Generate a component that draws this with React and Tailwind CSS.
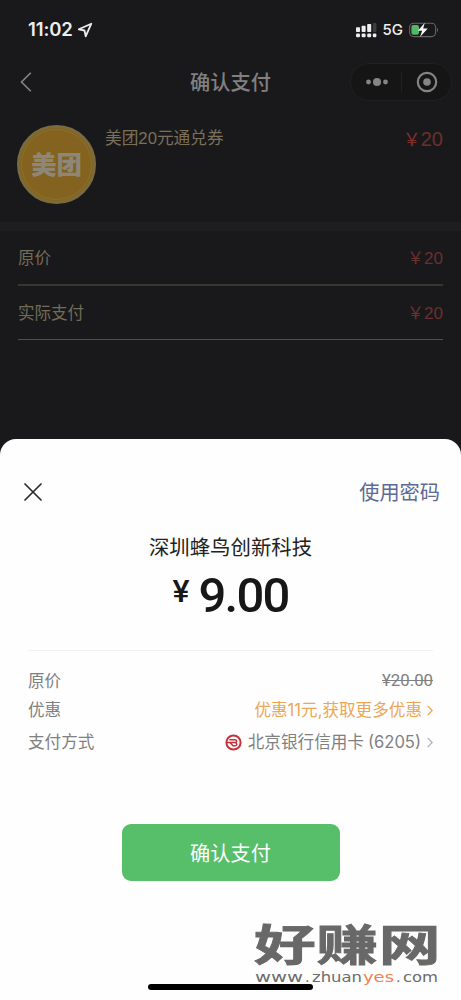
import React from 'react';

const bill = [
  { label: '原价', amount: '20', className: 'h-[55px] border-b-2 border-[#373731]' },
  { label: '实际支付', amount: '20', className: 'h-[54px] border-b border-[#505049]' },
];

const LocationArrow = () => (
  <svg viewBox="0 0 16 16" className="w-4 h-4" fill="none" stroke="#ededed" strokeWidth="1.8" strokeLinejoin="round">
    <path d="M14.3 1.7 1.8 7.3l5.7 1.2 1.2 5.8z" />
  </svg>
);

const Signal = () => (
  <svg viewBox="0 0 21 15" className="w-[21px] h-[15px]" fill="#ededed">
    <rect x="0" y="4.2" width="4" height="4.8" rx="0.8" />
    <rect x="5.6" y="2.8" width="4" height="6.2" rx="0.8" />
    <rect x="11.2" y="1" width="4" height="8" rx="0.8" />
    <rect x="16.8" y="0" width="3.6" height="9" rx="0.8" fill="#3d3d40" />
    <rect x="0" y="10.6" width="4" height="3.6" rx="1.2" />
    <rect x="5.6" y="10.6" width="4" height="3.6" rx="1.2" />
    <rect x="11.2" y="10.6" width="4" height="3.6" rx="1.2" />
    <rect x="16.8" y="10.6" width="3.6" height="3.6" rx="1.2" />
  </svg>
);

const Battery = () => (
  <svg viewBox="0 0 30 16" className="w-[30px] h-4">
    <rect x="0.6" y="1.2" width="26" height="13.4" rx="4" fill="none" stroke="#656567" strokeWidth="1.1" />
    <path d="M28 5.8c1.4.6 1.4 3.6 0 4.2z" fill="#656567" />
    <rect x="2.4" y="3" width="7.6" height="9.8" rx="2" fill="#54b965" />
    <path d="M15.8.8 8.8 8.8h4.3L11 15l7.8-8.6h-4.6z" fill="#f4f4f4" />
  </svg>
);

const BankLogo = () => (
  <svg viewBox="0 0 17 17" className="w-[17px] h-[17px]" fill="none" stroke="#c5313c">
    <circle cx="8.5" cy="8.5" r="7.1" strokeWidth="2" />
    <path d="M4.4 5.8h5.4c2.4 0 2.4 2.8.2 2.8H2M9.8 8.6c2.6 0 2.6 3.2.2 3.2H8L5.2 8.8" strokeWidth="1.5" />
  </svg>
);

const Chevron = ({ className }) => (
  <svg viewBox="0 0 6 11" className={className} fill="none" stroke="currentColor" strokeWidth="1.3">
    <path d="M.7.9 5.1 5.5.7 10.1" />
  </svg>
);

const Coupon = () => (
  <div className="flex h-[118px] pt-[21px] pl-[17px] pr-[18px]">
    <div className="w-[79px] h-[79px] shrink-0 rounded-full bg-[#83631f] border-[3px] border-[#7b6a3b] p-px">
      <div className="w-full h-full rounded-full border border-[#907024] flex items-center justify-center pt-[2px] text-[25.5px] leading-none font-black text-[#8e8778]">
        <span>美团</span>
      </div>
    </div>
    <p className="ml-[9px] pt-[1px] text-[16.7px] leading-[26px] text-[#7a7059]">美团20元通兑券</p>
    <p className="ml-auto text-[20px] leading-[28px] text-[#69302d]">
      <span className="text-[18px] text-[#80302b]">￥</span>20
    </p>
  </div>
);

const PaySheet = () => (
  <section className="h-[561px] bg-[#fefefe] rounded-t-[16px] pt-[38px] font-['Inter','Noto_Sans_CJK_SC',sans-serif]">
    <div className="flex items-center justify-between h-[30px] pl-[24px] pr-[21px]">
      <svg viewBox="0 0 18 18" className="w-[18px] h-[18px]" stroke="#2b2b2b" strokeWidth="1.7" strokeLinecap="round">
        <path d="M1 1l16 16M17 1 1 17" />
      </svg>
      <span className="pt-[2px] text-[20.2px] leading-[30px] text-[#5d6a94]">使用密码</span>
    </div>

    <h2 className="mt-[26px] text-center text-[20.4px] leading-[30px] text-[#222222]">深圳蜂鸟创新科技</h2>
    <div className="flex justify-center h-[56px] mt-[4px] font-['Roboto',sans-serif] font-medium text-[#171717]">
      <span className="mt-[5px] mr-[9px] text-[32px] leading-[38px]">¥</span>
      <span className="pt-[1px] text-[49px] leading-[56px] tracking-[-1.8px]">9.00</span>
    </div>

    <div className="mx-[28px] mt-[27px] pt-[16px] border-t border-[#f0f0f0] text-[16.6px] text-[#808080]">
      <div className="flex justify-between h-[29px] leading-[28px]">
        <span>原价</span>
        <span className="line-through font-['Roboto',sans-serif] text-[16.8px] leading-[27px]">¥20.00</span>
      </div>
      <div className="flex justify-between h-[30px] leading-[28px]">
        <span>优惠</span>
        <span className="flex items-center h-[28px] text-[#eba755]">
          优惠11元,获取更多优惠
          <Chevron className="w-[6px] h-[11px] ml-[5px]" />
        </span>
      </div>
      <div className="flex justify-between h-[32px] leading-[32px]">
        <span>支付方式</span>
        <span className="flex items-center">
          <BankLogo />
          <span className="ml-[6px] mr-[4px]">北京银行信用卡</span>
          (6205)
          <Chevron className="w-[6px] h-[11px] ml-[6px] text-[#b4b4b4]" />
        </span>
      </div>
    </div>

    <button className="block mx-auto mt-[66px] w-[218px] h-[57px] pt-[3px] rounded-[9px] bg-[#57be6a] text-[20.2px] text-white">
      确认支付
    </button>
    <div className="mx-auto mt-[103px] w-[165px] h-[6px] rounded-full bg-black" />
  </section>
);

const Watermark = () => (
  <div className="absolute left-[254px] top-[912px] w-[190px]">
    <div className="flex origin-left scale-x-[1.42] gap-[0.4px] h-[56px] font-['Noto_Sans_CJK_SC',sans-serif] font-bold text-[43.5px] leading-[62px] text-[#686868] [-webkit-text-stroke:0.8px_#686868]">
      <span>好</span>
      <span>赚</span>
      <span>网</span>
    </div>
    <svg viewBox="0 0 190 20" className="w-[190px] h-5" fill="#6b6b6b" fontSize="14.5" fontFamily="'DejaVu Sans', sans-serif">
      <text y="13.5">
        <tspan x="1" textLength="48" lengthAdjust="spacingAndGlyphs">www</tspan>
        <tspan x="51">.</tspan>
        <tspan x="58" textLength="50" lengthAdjust="spacingAndGlyphs">zhuan</tspan>
        <tspan x="109" textLength="31" lengthAdjust="spacingAndGlyphs" fill="#f0814f">yes</tspan>
        <tspan x="142">.</tspan>
        <tspan x="149" textLength="35" lengthAdjust="spacingAndGlyphs">com</tspan>
      </text>
    </svg>
  </div>
);

const App = () => {
  return (
    <main className="relative w-[461px] h-[1000px] overflow-hidden bg-[#19191b] font-['Liberation_Sans','Noto_Sans_CJK_SC',sans-serif]">
      <div className="flex items-center h-[60px] pl-[28px] pr-[22px] font-['Inter',sans-serif] text-[#ededed]">
        <span className="text-[18.5px] font-semibold tracking-[-0.1px] mr-[4px]">11:02</span>
        <LocationArrow />
        <div className="flex items-center ml-auto">
          <Signal />
          <span className="ml-[6px] mr-[6px] text-[15px] font-medium">5G</span>
          <Battery />
        </div>
      </div>

      <header className="flex items-center justify-between h-[44px] pl-[20px] pr-[9px]">
        <svg viewBox="0 0 12 20" className="w-3 h-5 mr-[79px]" fill="none" stroke="#858585" strokeWidth="1.6">
          <path d="M10.8.8 1.5 10l9.3 9.2" />
        </svg>
        <h1 className="pt-[2px] text-[20.2px] leading-[30px] font-medium text-[#808080]">确认支付</h1>
        <div className="flex items-center w-[102px] h-[38px] rounded-full border border-[#202022] bg-[#151516]">
          <svg viewBox="0 0 24 10" className="w-[24px] h-[10px] ml-[14px]" fill="#858585">
            <circle cx="3.5" cy="5" r="2.4" />
            <circle cx="12" cy="5" r="4" />
            <circle cx="20.5" cy="5" r="2.4" />
          </svg>
          <div className="w-px h-5 ml-[12px] bg-[#222224]" />
          <svg viewBox="0 0 22 22" className="w-[22px] h-[22px] ml-[14px]">
            <circle cx="11" cy="11" r="9.2" fill="none" stroke="#858585" strokeWidth="2.2" />
            <circle cx="11" cy="11" r="3.8" fill="#858585" />
          </svg>
        </div>
      </header>

      <Coupon />
      <div className="h-[9px] bg-[#1e1e20]" />

      <div className="h-[208px] px-[18px]">
        {bill.map((row) => (
          <div
            key={row.label}
            className={`flex items-center justify-between pt-[2px] text-[16.5px] text-[#736b56] ${row.className}`}
          >
            <span>{row.label}</span>
            <span className="text-[17px] text-[#69302d]">￥{row.amount}</span>
          </div>
        ))}
      </div>

      <PaySheet />
      <Watermark />
    </main>
  );
};

export default App;
